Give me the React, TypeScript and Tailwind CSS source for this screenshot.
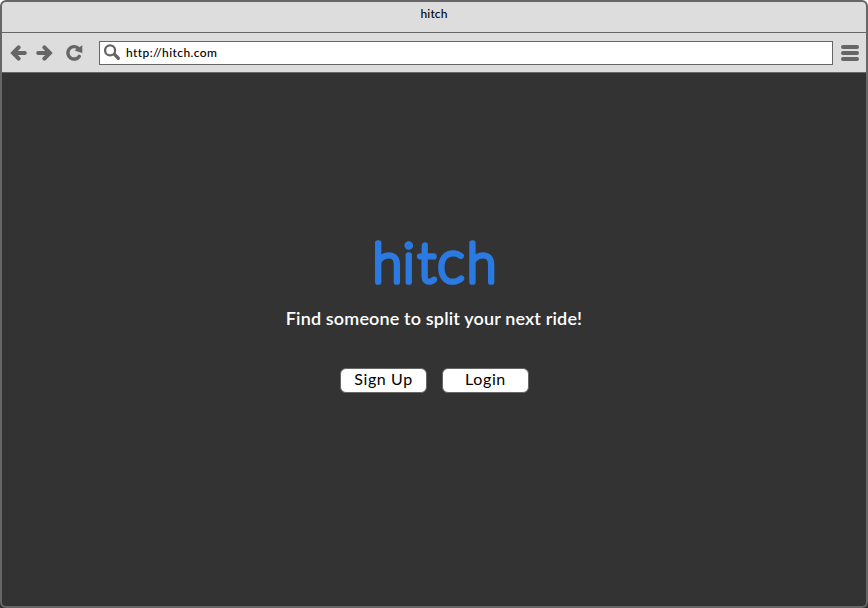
import React from "react";

function Arrow({ flip = false }: { flip?: boolean }) {
  return (
    <svg width="17" height="16" viewBox="0 0 17 16" className={flip ? "-scale-x-100" : ""}>
      <path d="M8.6 2.4 3.1 8l5.5 5.6M4 8h10.8" fill="none" stroke="#666" strokeWidth="4" strokeLinecap="round" />
    </svg>
  );
}

function Reload() {
  return (
    <svg width="17" height="17" viewBox="0 0 17 17">
      <path d="M13.2 12.4A6.2 6.2 0 1 1 12 4" fill="none" stroke="#666" strokeWidth="3.4" strokeLinecap="round" />
      <path d="M16.3 1.2v7.8L8.4 6.6z" fill="#666" />
    </svg>
  );
}

function Search() {
  return (
    <svg width="17" height="17" viewBox="0 0 17 17">
      <circle cx="6.1" cy="6.4" r="5" fill="none" stroke="#666" strokeWidth="2.3" />
      <path d="m10.5 10.4 3.8 3.8" stroke="#666" strokeWidth="3.4" strokeLinecap="round" />
    </svg>
  );
}

function Button({ children }: { children: React.ReactNode }) {
  return (
    <button className="h-[25px] w-[87px] rounded-[6px] border border-[#666] bg-white pb-[3px] text-[16px] font-normal leading-[20px] tracking-[0.6px] text-black">
      {children}
    </button>
  );
}

export default function App() {
  return (
    <div className="h-[608px] w-[868px] bg-[linear-gradient(#fff_50%,#333_50%)] font-[Lato,sans-serif] font-medium">
      <div className="flex h-full flex-col overflow-hidden rounded-[6px] border-2 border-[#666] bg-[#333]">
        <header className="h-[31px] shrink-0 border-b border-[#666] bg-[#ddd] pt-[3px] text-center text-[12px] leading-[17px] tracking-[0.1px] text-black">
          hitch
        </header>
        <nav className="flex h-[40px] shrink-0 items-center border-b border-[#666] bg-[#ddd] pl-2 pr-[7px]">
          <Arrow />
          <div className="ml-[9px] flex"><Arrow flip /></div>
          <div className="ml-[13px]"><Reload /></div>
          <div className="ml-[16px] flex h-[24px] w-[734px] items-center border border-[#666] bg-white pl-[4px]">
            <Search />
            <span className="ml-[5px] text-[12px] leading-[17px] tracking-[0.4px] text-black">http://hitch.com</span>
          </div>
          <div className="ml-[8px] flex w-[18px] flex-col gap-[2px]">
            <span className="h-[4px] rounded-full bg-[#666]" />
            <span className="h-[4px] rounded-full bg-[#666]" />
            <span className="h-[4px] rounded-full bg-[#666]" />
          </div>
        </nav>
        <main className="flex flex-1 flex-col items-center">
          <h1 className="mt-[153px] h-[75px]">
            <svg width="150" height="75" viewBox="0 0 150 75" role="img">
              <text
                x="14 44.2 59 78.6 108.3"
                y="56.1"
                fontFamily="Lato"
                fontWeight="100"
                fontSize="53"
                fill="#2a7ae2"
                stroke="#2a7ae2"
                strokeWidth="5.7"
                strokeLinejoin="round"
              >
                hit<tspan fontSize="57">c</tspan>h
              </text>
            </svg>
          </h1>
          <p className="mt-[5px] whitespace-nowrap text-[18px] font-semibold leading-6 tracking-[0.15px] text-white">
            Find someone to split your next ride!
          </p>
          <div className="mt-[38px] flex gap-[15px] pl-px">
            <Button>Sign Up</Button>
            <Button>Login</Button>
          </div>
        </main>
      </div>
    </div>
  );
}
